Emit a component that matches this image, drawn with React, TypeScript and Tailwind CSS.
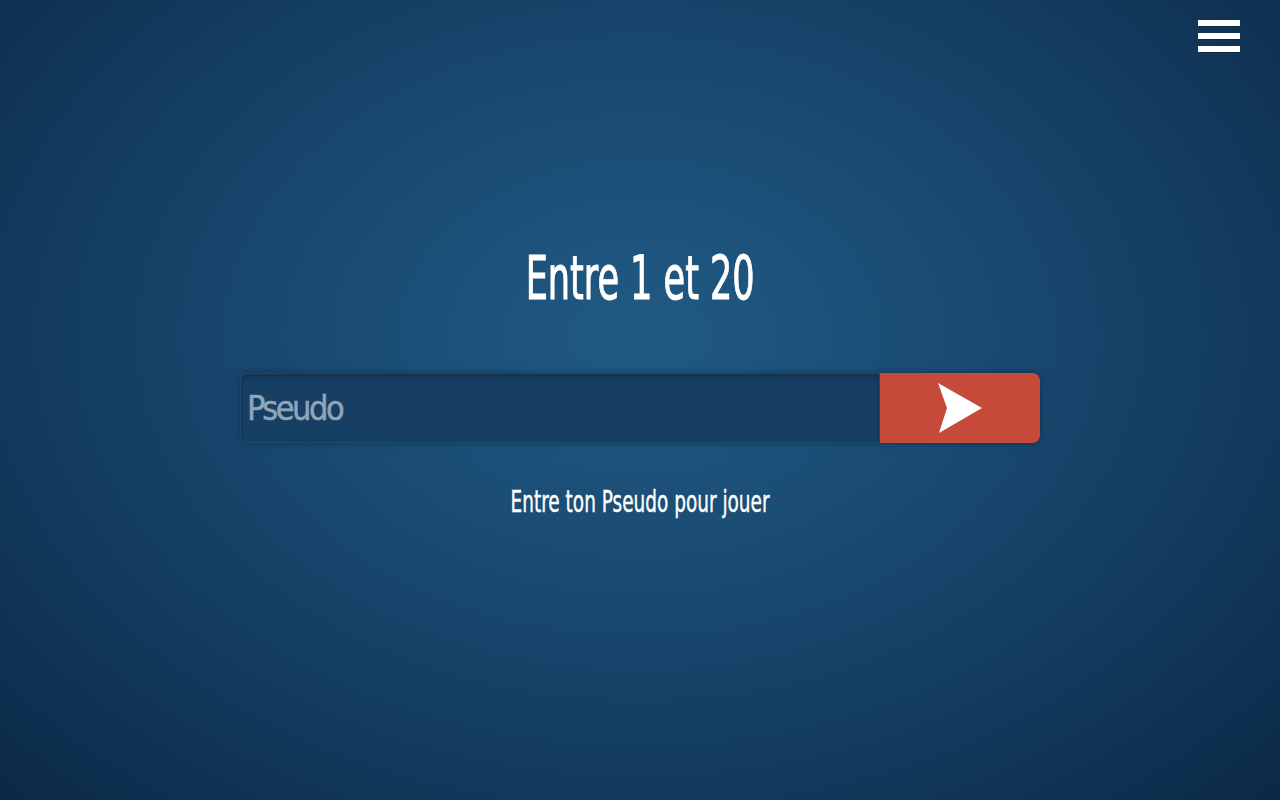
export default function App() {
  return (
    <div
      className="relative w-full h-screen overflow-hidden bg-[radial-gradient(ellipse_at_50%_42%,#205a84_0%,#1a4b72_35%,#133c60_65%,#0c2947_100%)]"
      style={{ fontFamily: "'DejaVu Sans Condensed', 'Liberation Sans', sans-serif" }}
    >
      <button className="absolute top-[20px] right-[40px] flex flex-col gap-[7px]" aria-label="menu">
        <span className="block w-[42px] h-[6px] bg-white shadow-[0_1px_0_rgba(0,0,0,0.25)]" />
        <span className="block w-[42px] h-[6px] bg-white shadow-[0_1px_0_rgba(0,0,0,0.25)]" />
        <span className="block w-[42px] h-[6px] bg-white shadow-[0_1px_0_rgba(0,0,0,0.25)]" />
      </button>

      <div className="flex flex-col items-center pt-[245px]">
        <h1 className="text-[60px] leading-[66px] text-white [-webkit-text-stroke:1px_white]">
          <span className="inline-block scale-x-[0.65]">Entre 1 et 20</span>
        </h1>

        <div className="mt-[62px] flex w-[800px] h-[70px] rounded-[8px] shadow-[0_0_6px_rgba(10,30,55,0.5)]">
          <input
            placeholder="Pseudo"
            className="flex-1 min-w-0 h-full rounded-l-[8px] bg-[#173f63] border border-[#1d4b71] shadow-[inset_0_2px_4px_rgba(0,0,0,0.3)] px-[6px] text-[34px] tracking-[-2.5px] text-[#8fa6bb] placeholder:text-[#8ea5ba] outline-none [-webkit-text-stroke:0.5px_#8ea5ba]"
          />
          <button className="w-[160px] h-full rounded-r-[8px] bg-[#c64a3a] flex items-center justify-center">
            <svg width="44" height="50" viewBox="0 0 44 50">
              <polygon points="0,0 44,25 1,50 9,25" fill="#ffffff" />
            </svg>
          </button>
        </div>

        <p className="mt-[44px] text-[30px] leading-[30px] text-white [-webkit-text-stroke:0.4px_white]">
          <span className="inline-block scale-x-[0.685]">Entre ton Pseudo pour jouer</span>
        </p>
      </div>
    </div>
  )
}
